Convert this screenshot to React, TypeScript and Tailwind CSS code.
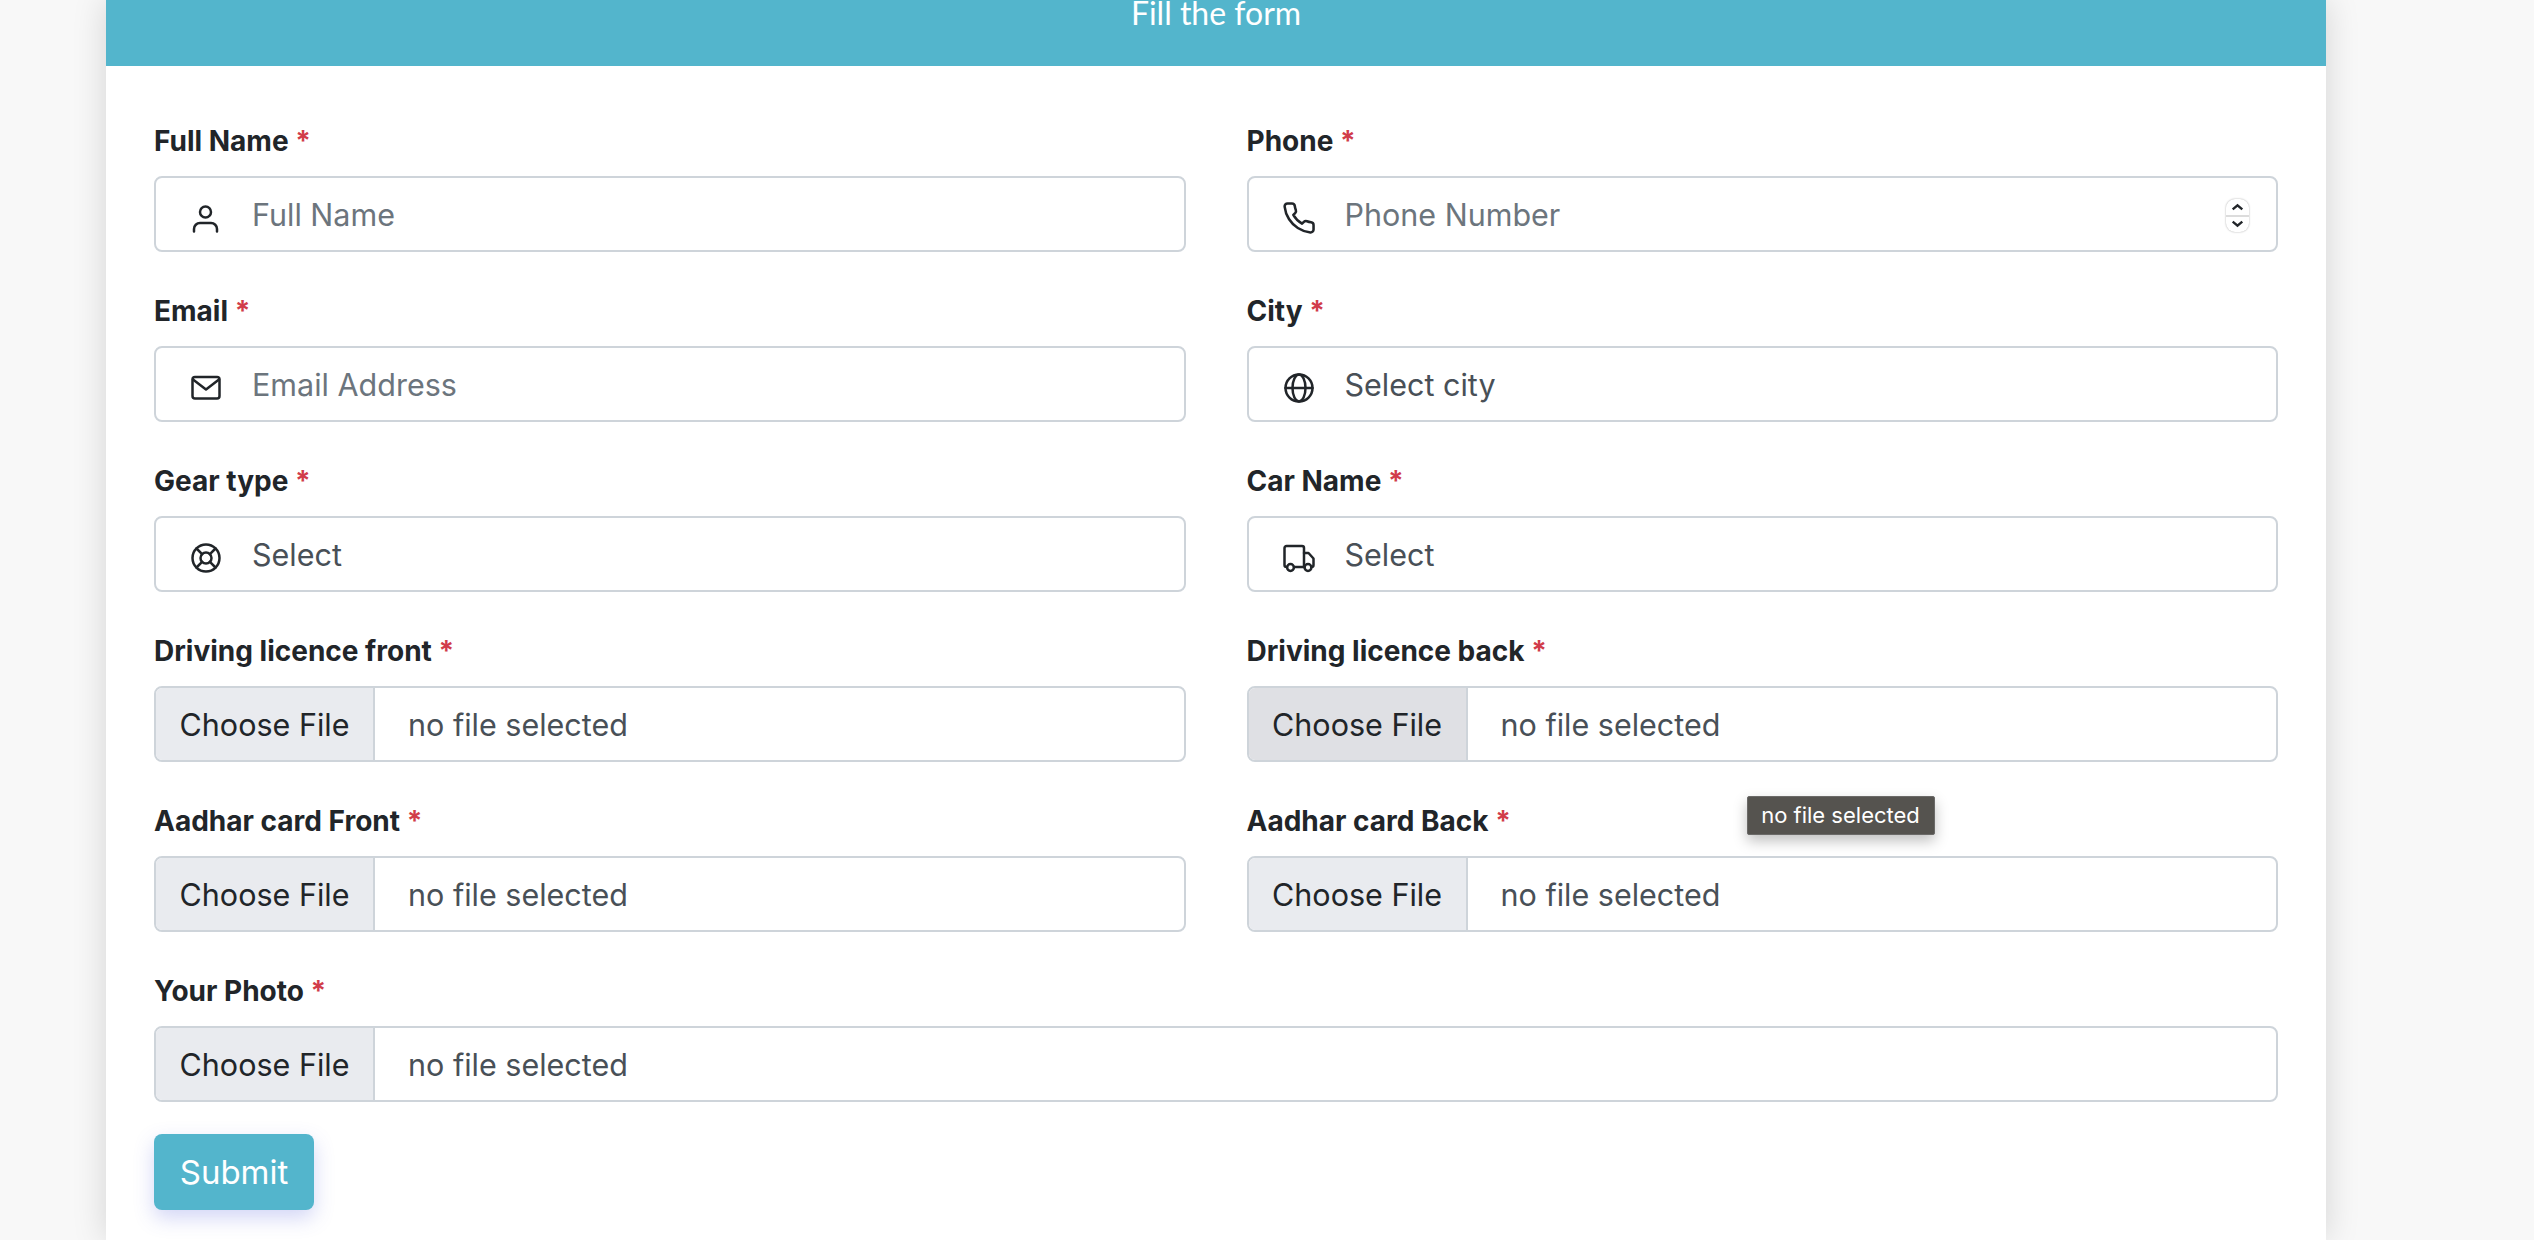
import React from "react";

const font = "[font-family:Inter,'Liberation_Sans',sans-serif]";

function Stroke({ children, box = "0 0 32 32", width = 2.5 }: { children: React.ReactNode; box?: string; width?: number }) {
  return (
    <svg
      viewBox={box}
      className="h-[32px] w-[32px] fill-none stroke-[#212529]"
      strokeWidth={width}
      strokeLinecap="round"
      strokeLinejoin="round"
    >
      {children}
    </svg>
  );
}

const PersonIcon = () => (
  <Stroke>
    <circle cx="15.5" cy="10" r="5.5" />
    <path d="M4 29.5V27a6 6 0 0 1 6-6h11a6 6 0 0 1 6 6v2.5" />
  </Stroke>
);
const PhoneIcon = () => (
  <Stroke box="1 1 22 22" width={1.75}>
    <path d="M22 16.92v3a2 2 0 0 1-2.18 2 19.79 19.79 0 0 1-8.63-3.07 19.5 19.5 0 0 1-6-6 19.79 19.79 0 0 1-3.07-8.67A2 2 0 0 1 4.11 2h3a2 2 0 0 1 2 1.72 12.84 12.84 0 0 0 .7 2.81 2 2 0 0 1-.45 2.11L8.09 9.91a16 16 0 0 0 6 6l1.27-1.27a2 2 0 0 1 2.11-.45 12.84 12.84 0 0 0 2.81.7A2 2 0 0 1 22 16.92z" />
  </Stroke>
);
const MailIcon = () => (
  <Stroke>
    <rect x="2.5" y="5" width="27" height="21.5" rx="2.5" />
    <path d="M3 7.5l13 10 13-10" />
  </Stroke>
);
const GlobeIcon = () => (
  <Stroke>
    <circle cx="16" cy="16" r="13.5" />
    <ellipse cx="16" cy="16" rx="6.5" ry="13.5" />
    <path d="M2.5 16h27" />
  </Stroke>
);
const LifeIcon = () => (
  <Stroke>
    <circle cx="16" cy="16" r="13.5" />
    <circle cx="16" cy="16" r="5.5" />
    <path d="M6.5 6.5l5.6 5.6M25.5 6.5l-5.6 5.6M6.5 25.5l5.6-5.6M25.5 25.5l-5.6-5.6" />
  </Stroke>
);
const TruckIcon = () => (
  <Stroke>
    <path d="M4 25H3.5a2 2 0 0 1-2-2V6a2 2 0 0 1 2-2H19a2 2 0 0 1 2 2v19H11" />
    <path d="M21 11h4.5l5 5.5V23a2 2 0 0 1-2 2M21 25h.5" />
    <circle cx="7.5" cy="25.5" r="3.4" />
    <circle cx="25" cy="25.5" r="3.4" />
  </Stroke>
);

function Label({ text }: { text: string }) {
  return (
    <div className="mb-[16px] h-[38px] text-[28px] font-bold leading-[38px] text-[#212529]">
      {text} <span className="text-[#d13c4a]">*</span>
    </div>
  );
}

function IconField({
  label,
  icon,
  text,
  placeholder,
  spinner,
}: {
  label: string;
  icon: React.ReactNode;
  text: string;
  placeholder?: boolean;
  spinner?: boolean;
}) {
  return (
    <div>
      <Label text={label} />
      <div className="flex h-[76px] items-center rounded-[8px] border-2 border-[#ced4da] bg-white">
        <span className="ml-[34px] mt-[8px] flex w-[32px] justify-center">{icon}</span>
        <span
          className={`ml-[30px] mt-[1px] text-[30.5px] leading-[48px] ${placeholder ? "text-[#6c757d]" : "text-[#495057]"}`}
        >
          {text}
        </span>
        {spinner && (
          <span className="ml-auto mr-[27px] mt-[3px] flex h-[33px] w-[23px] flex-col items-center justify-between rounded-[9px] bg-white py-[4px] shadow-[0_0_2px_rgba(0,0,0,0.35)]">
            <svg viewBox="0 0 16 10" className="h-[8px] w-[13px] fill-none stroke-[#212529] stroke-[3]">
              <path d="M2 8l6-5 6 5" />
            </svg>
            <span className="h-[2px] w-full bg-[#dcdcdc]" />
            <svg viewBox="0 0 16 10" className="h-[8px] w-[13px] fill-none stroke-[#212529] stroke-[3]">
              <path d="M2 2l6 5 6-5" />
            </svg>
          </span>
        )}
      </div>
    </div>
  );
}

function FileField({ label, hover, tooltip }: { label: string; hover?: boolean; tooltip?: boolean }) {
  return (
    <div className="relative">
      <Label text={label} />
      <div className="flex h-[76px] items-center overflow-hidden rounded-[8px] border-2 border-[#ced4da] bg-white">
        <span
          className={`flex h-full w-[219px] items-center justify-center border-r-2 border-[#ced4da] pt-[1px] text-[30.5px] text-[#212529] ${hover ? "bg-[#dfe0e4]" : "bg-[#e9ebef]"}`}
        >
          Choose File
        </span>
        <span className="ml-[33px] mt-[1px] text-[30.5px] text-[#495057]">no file selected</span>
      </div>
      {tooltip && (
        <div className="absolute left-[500px] top-[-6px] flex h-[39px] w-[188px] items-center justify-center rounded-[2px] border border-[#6b6a68] bg-[#55534f] text-[22px] text-white shadow-[0_6px_14px_rgba(0,0,0,0.25)]">
          no file selected
        </div>
      )}
    </div>
  );
}

export default function App() {
  return (
    <div className={`h-[1240px] overflow-hidden bg-[#f8f8f8] ${font}`}>
      <div className="ml-[106px] h-[1240px] w-[2220px] bg-white shadow-[0_0_32px_rgba(0,0,0,0.15)]">
        <div className="flex h-[66px] items-end justify-center bg-[#53b5cc] pb-[31px]">
          <span className="text-[32px] leading-[44px] text-white [font-family:Lato,sans-serif]">Fill the form</span>
        </div>
        <div className="px-[48px] pt-[56px]">
          <div className="grid grid-cols-2 gap-x-[61px] gap-y-[40px]">
            <IconField label="Full Name" icon={<PersonIcon />} text="Full Name" placeholder />
            <IconField label="Phone" icon={<PhoneIcon />} text="Phone Number" placeholder spinner />
            <IconField label="Email" icon={<MailIcon />} text="Email Address" placeholder />
            <IconField label="City" icon={<GlobeIcon />} text="Select city" />
            <IconField label="Gear type" icon={<LifeIcon />} text="Select" />
            <IconField label="Car Name" icon={<TruckIcon />} text="Select" />
            <FileField label="Driving licence front" />
            <FileField label="Driving licence back" hover />
            <FileField label="Aadhar card Front" />
            <FileField label="Aadhar card Back" tooltip />
            <div className="col-span-2">
              <FileField label="Your Photo" />
            </div>
          </div>
          <button className="mt-[32px] flex h-[76px] w-[160px] items-center justify-center rounded-[8px] bg-[#53b5cc] pt-[1px] text-[33px] text-white shadow-[0_8px_20px_rgba(80,90,220,0.25)]">
            Submit
          </button>
        </div>
      </div>
    </div>
  );
}
